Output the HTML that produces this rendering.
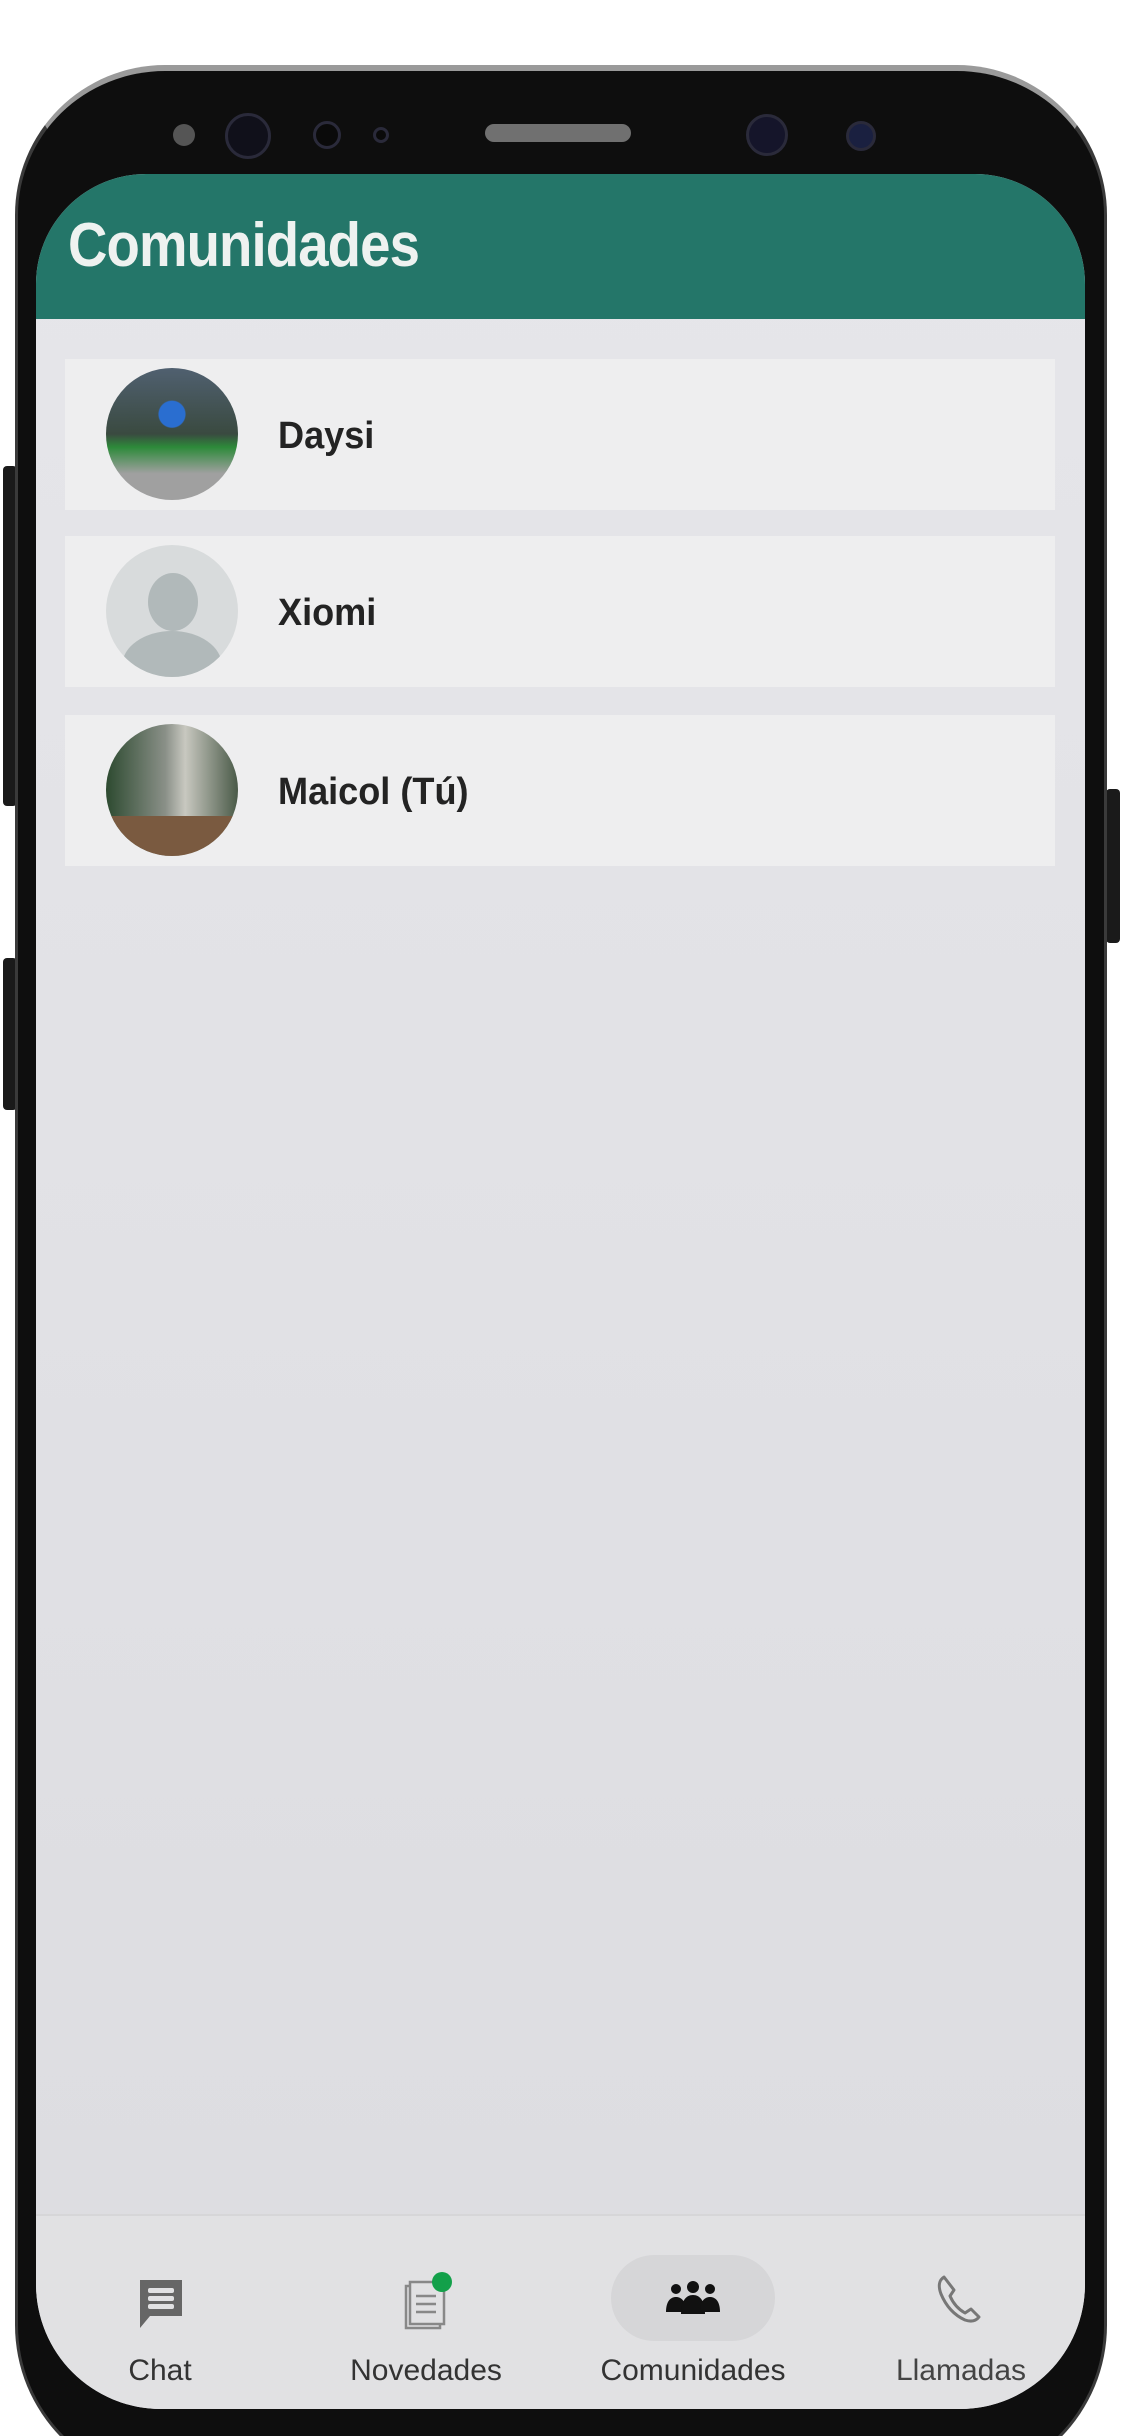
<!DOCTYPE html>
<html><head><meta charset="utf-8"><style>
*{margin:0;padding:0;box-sizing:border-box}
html,body{width:1125px;height:2436px;overflow:hidden;background:#fff}
body{font-family:"Liberation Sans",sans-serif}
#wrap{position:relative;width:1125px;height:2436px;overflow:hidden;background:#fff}
.btn{position:absolute;background:#1a1a1a;border-radius:4px}
.phone{position:absolute;left:15px;top:65px;width:1092px;height:2420px;background:#0e0e0e;border-radius:150px 150px 160px 160px;border:3px solid #3a3a3a;border-top:6px solid #9a9a9a}
.screen{position:absolute;left:36px;top:174px;width:1049px;height:2235px;background:linear-gradient(#e6e6ea,#dcdce0);border-radius:110px 110px 125px 125px;overflow:hidden}
.head{position:absolute;left:0;top:0;width:100%;height:145px;background:#247669}
.title{position:absolute;left:32px;top:36px;font-size:62px;font-weight:bold;color:#eef2f0;transform:scaleX(0.88);transform-origin:left;letter-spacing:-1px}
.card{position:absolute;left:29px;width:990px;height:151px;background:#eeeeef}
.av{position:absolute;left:41px;top:9px;width:132px;height:132px;border-radius:50%;overflow:hidden}
.name{position:absolute;left:213px;top:56px;font-size:38px;font-weight:bold;color:#232323;transform:scaleX(0.95);transform-origin:left}
.nav{position:absolute;left:0;top:2040px;width:100%;height:200px;background:#e1e1e3;border-top:2px solid #d6d6d8}
.lbl{position:absolute;top:138px;font-size:30px;color:#333;transform:translateX(-50%);white-space:nowrap}
.dot{position:absolute;border-radius:50%;background:#0a0a0a;border:3px solid #2a2a3a}
</style></head><body><div id="wrap">
<div class="btn" style="left:3px;top:466px;width:14px;height:340px"></div>
<div class="btn" style="left:3px;top:958px;width:14px;height:152px"></div>
<div class="btn" style="left:1106px;top:789px;width:14px;height:154px"></div>
<div class="phone"></div>
<div class="dot" style="left:173px;top:124px;width:22px;height:22px;background:#555;border:none"></div>
<div class="dot" style="left:225px;top:113px;width:46px;height:46px;background:#10101a"></div>
<div class="dot" style="left:313px;top:121px;width:28px;height:28px"></div>
<div class="dot" style="left:373px;top:127px;width:16px;height:16px"></div>
<div style="position:absolute;left:485px;top:124px;width:146px;height:18px;border-radius:9px;background:#707070"></div>
<div class="dot" style="left:746px;top:114px;width:42px;height:42px;background:#15152a"></div>
<div class="dot" style="left:846px;top:121px;width:30px;height:30px;background:#1a2040"></div>
<div class="screen">
 <div class="head"><div class="title">Comunidades</div></div>
 <div class="card" style="top:185px"><div class="av" style="background:radial-gradient(circle at 50% 35%,#2a6ed0 0 12%,transparent 13%),linear-gradient(#506070,#3a4a40 50%,#2d8a3a 60%,#a0a0a0 80%)"></div><div class="name">Daysi</div></div>
 <div class="card" style="top:362px"><div class="av" style="background:#d8dbdc"><div style="position:absolute;left:42px;top:28px;width:50px;height:58px;border-radius:50%;background:#b1b9ba"></div><div style="position:absolute;left:16px;top:86px;width:100px;height:70px;border-radius:50% 50% 0 0;background:#b1b9ba"></div></div><div class="name">Xiomi</div></div>
 <div class="card" style="top:541px"><div class="av" style="background:linear-gradient(90deg,#2d4a30,#8a9088 45%,#c8c8c0 60%,#4a5a48);"><div style="position:absolute;left:0;bottom:0;width:100%;height:40px;background:#7a5a40"></div></div><div class="name">Maicol (Tú)</div></div>
 <div class="nav">
  <svg style="position:absolute;left:102px;top:62px" width="46" height="52" viewBox="0 0 46 52"><path d="M2 2h42v36H12L2 50z" fill="#666"/><rect x="10" y="10" width="26" height="5" rx="2" fill="#e1e1e3"/><rect x="10" y="18" width="26" height="5" rx="2" fill="#e1e1e3"/><rect x="10" y="26" width="26" height="5" rx="2" fill="#e1e1e3"/></svg>
  <div class="lbl" style="left:124px">Chat</div>
  <svg style="position:absolute;left:368px;top:56px" width="50" height="60" viewBox="0 0 50 60"><rect x="2" y="14" width="34" height="42" fill="none" stroke="#888" stroke-width="2.5"/><rect x="6" y="10" width="34" height="42" fill="#e1e1e3" stroke="#888" stroke-width="2.5"/><path d="M12 24h20M12 32h20M12 40h20" stroke="#888" stroke-width="2.5"/><circle cx="38" cy="10" r="10" fill="#13a04a"/></svg>
  <div class="lbl" style="left:390px">Novedades</div>
  <div style="position:absolute;left:575px;top:39px;width:164px;height:86px;border-radius:43px;background:#d6d6d8"></div>
  <svg style="position:absolute;left:630px;top:64px" width="54" height="36" viewBox="0 0 54 36"><g fill="#111"><circle cx="10" cy="9" r="5"/><circle cx="27" cy="7" r="6"/><circle cx="44" cy="9" r="5"/><path d="M0 32c0-10 4-15 10-15s10 5 10 15z"/><path d="M15 34c0-13 5-19 12-19s12 6 12 19z"/><path d="M34 32c0-10 4-15 10-15s10 5 10 15z"/></g></svg>
  <div class="lbl" style="left:657px">Comunidades</div>
  <svg style="position:absolute;left:900px;top:58px" width="48" height="50" viewBox="0 0 48 50"><path d="M8 3c-5 3-6 9-3 17 5 12 13 21 24 26 6 2 11 1 14-3l-8-8-6 4c-7-4-12-10-15-17l4-6z" fill="none" stroke="#777" stroke-width="3" stroke-linejoin="round"/></svg>
  <div class="lbl" style="left:925px;color:#444">Llamadas</div>
 </div>
</div>
</div></body></html>
